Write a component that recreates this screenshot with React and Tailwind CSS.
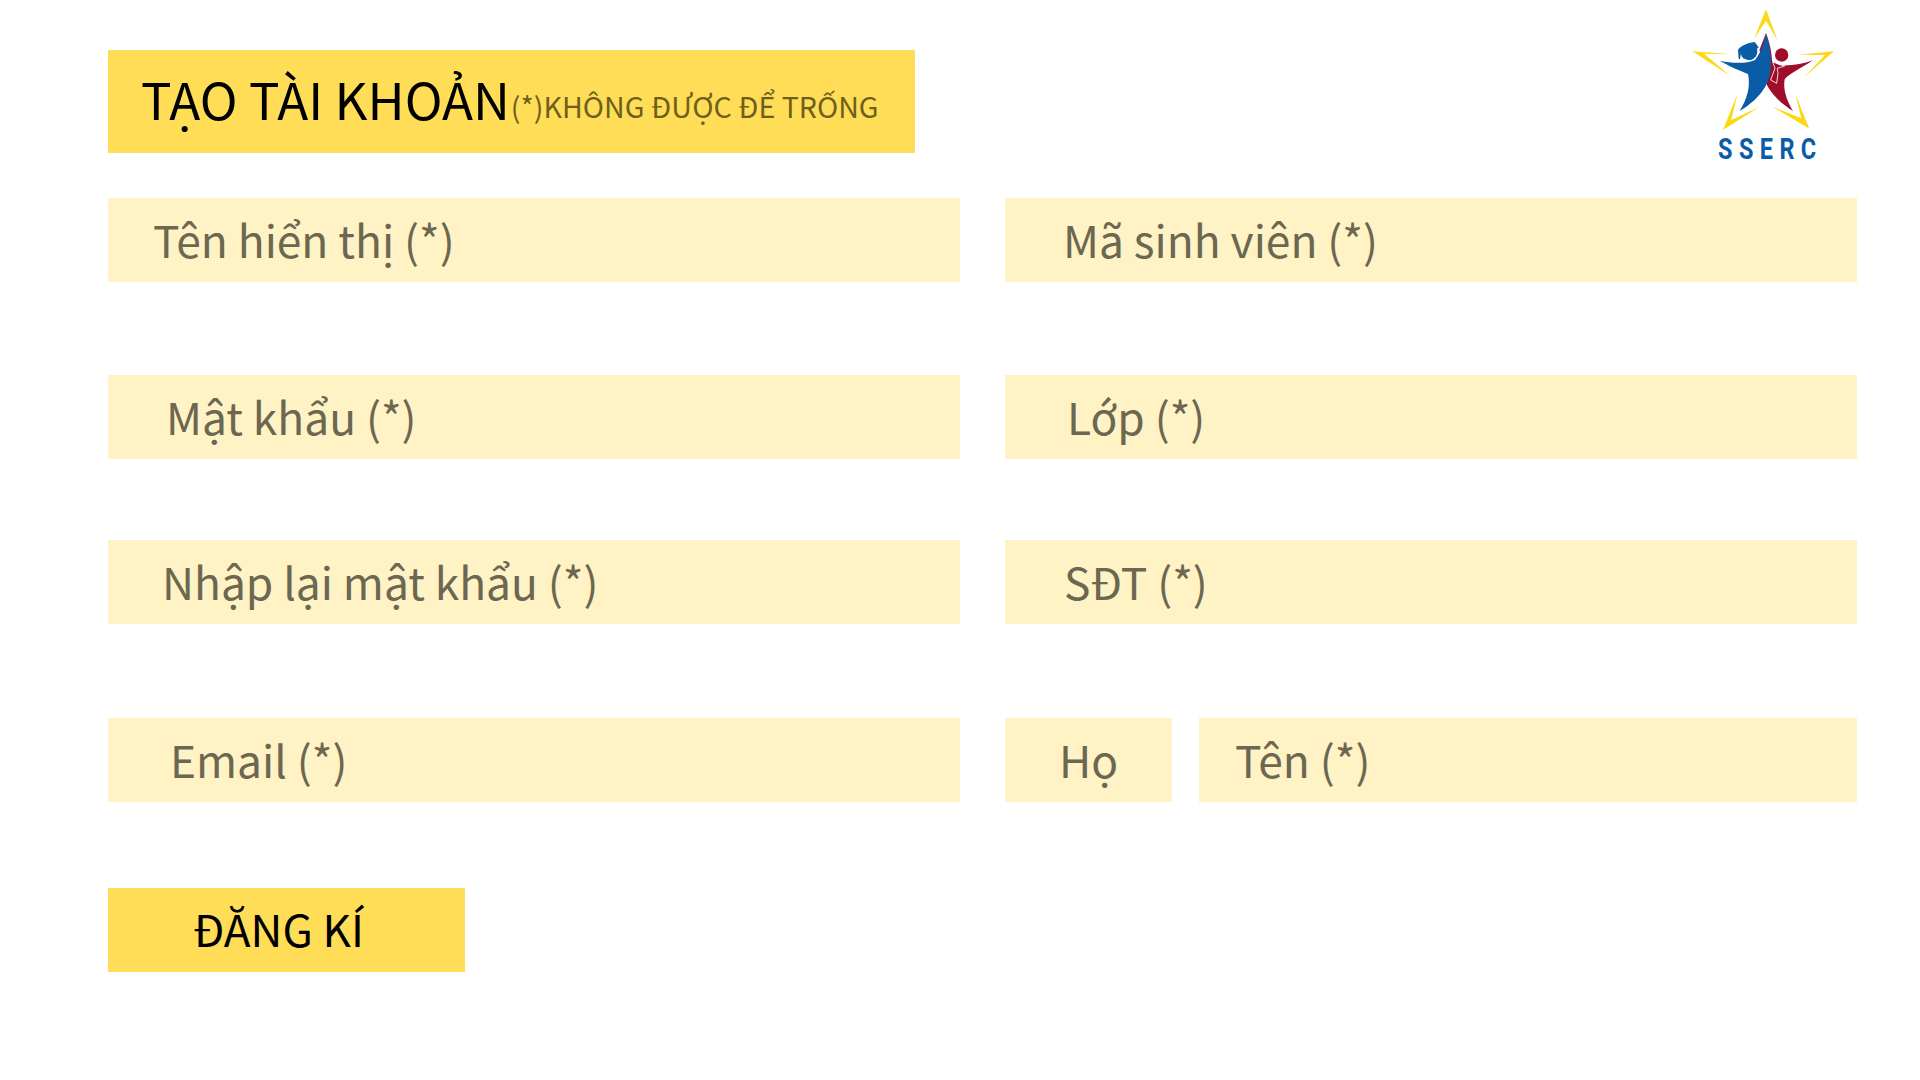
const Logo = () => (
  <svg viewBox="0 0 600 540" className="w-[200px] h-[180px] shrink-0">
    <g fill="#fbd914">
      <path d="M318 28 L353 122 L318 62 L282 117 Z" />
      <path d="M415 164 L522 154 L433 231 L495 165 Z" />
      <path d="M406 283 L448 386 L337 320 L424 355 Z" />
      <path d="M232 282 L189 390 L299 320 L214 360 Z" />
      <path d="M97 154 L216 163 L132 161 L212 229 Z" />
    </g>
    <path
      fill="#a00d2b"
      d="M318 100 C328 125 336 160 336 184 L360 196 C395 198 430 192 458 181 C425 205 385 222 374 238 C368 270 382 305 399 333 C365 312 335 285 318 250 C326 215 310 180 298 150 Z"
    />
    <circle cx="365" cy="165" r="20" fill="#a00d2b" />
    <path
      fill="#0b5ca6"
      d="M318 100 C330 140 337 180 331 215 C325 265 285 305 239 333 C262 295 272 260 264 222 C240 212 205 198 180 182 C215 190 260 192 285 180 C302 160 312 130 318 100 Z"
    />
    <path
      fill="#0b5ca6"
      d="M234 150 C238 140 262 128 284 126 L296 142 L291 146 C296 165 282 182 264 180 C250 178 243 170 243 160 L240 178 L236 176 Z"
    />
    <path
      fill="none"
      stroke="#ffffff"
      strokeWidth="2.5"
      d="M338 186 L374 198 L352 205 L354 220 L350 250 L332 240 L345 205 Z"
    />
    <text
      transform="translate(331 478) scale(0.8 1)"
      textAnchor="middle"
      fill="#0b5ca6"
      fontSize="88"
      fontWeight="700"
      letterSpacing="24"
      fontFamily="Roboto, sans-serif"
    >
      SSERC
    </text>
  </svg>
);

const Field = ({ label, className = "" }) => (
  <input
    type="text"
    placeholder={label}
    className={`h-[84px] pb-[3px] bg-[#fff2c5] text-[44.3px] text-[#6b6750] placeholder-[#6b6750] outline-none ${className}`}
    style={{ fontFamily: "'Noto Sans CJK SC', 'Noto Sans', sans-serif" }}
  />
);

export default function App() {
  return (
    <div
      className="w-[1920px] h-[1080px] overflow-hidden bg-white pl-[108px] pr-[63px] pt-[50px]"
      style={{ fontFamily: "'Noto Sans CJK SC', 'Noto Sans', sans-serif" }}
    >
      <div className="flex justify-between h-[148px]">
        <h1 className="flex items-center w-[807px] h-[103px] bg-[#ffdd57] pl-[33px] font-normal whitespace-nowrap">
          <span className="text-[51px] text-black -mt-[7px]">TẠO TÀI KHOẢN</span>
          <span className="ml-[1px] mt-[9px] text-[28.6px] text-[#6f5f1c]">(*)KHÔNG ĐƯỢC ĐỂ TRỐNG</span>
        </h1>
        <div className="-mt-[50px] -mr-[3px]">
          <Logo />
        </div>
      </div>

      <div className="grid grid-cols-[852px_852px] gap-x-[45px]">
        <Field label="Tên hiển thị (*)" className="w-full pl-[45px]" />
        <Field label="Mã sinh viên (*)" className="w-full pl-[58px]" />
        <Field label="Mật khẩu (*)" className="w-full pl-[58px] mt-[93px]" />
        <Field label="Lớp (*)" className="w-full pl-[62px] mt-[93px]" />
        <Field label="Nhập lại mật khẩu (*)" className="w-full pl-[54px] mt-[81px]" />
        <Field label="SĐT (*)" className="w-full pl-[59px] mt-[81px]" />
        <Field label="Email (*)" className="w-full pl-[62px] mt-[94px]" />
        <div className="flex gap-[27px] mt-[94px]">
          <Field label="Họ" className="w-[167px] pl-[54px]" />
          <Field label="Tên (*)" className="flex-1 min-w-0 pl-[36px]" />
        </div>
      </div>

      <button className="block mt-[86px] w-[357px] h-[84px] pb-[5px] bg-[#ffdd57] text-[44px] text-black pl-[85px] text-left">
        ĐĂNG KÍ
      </button>
    </div>
  );
}
